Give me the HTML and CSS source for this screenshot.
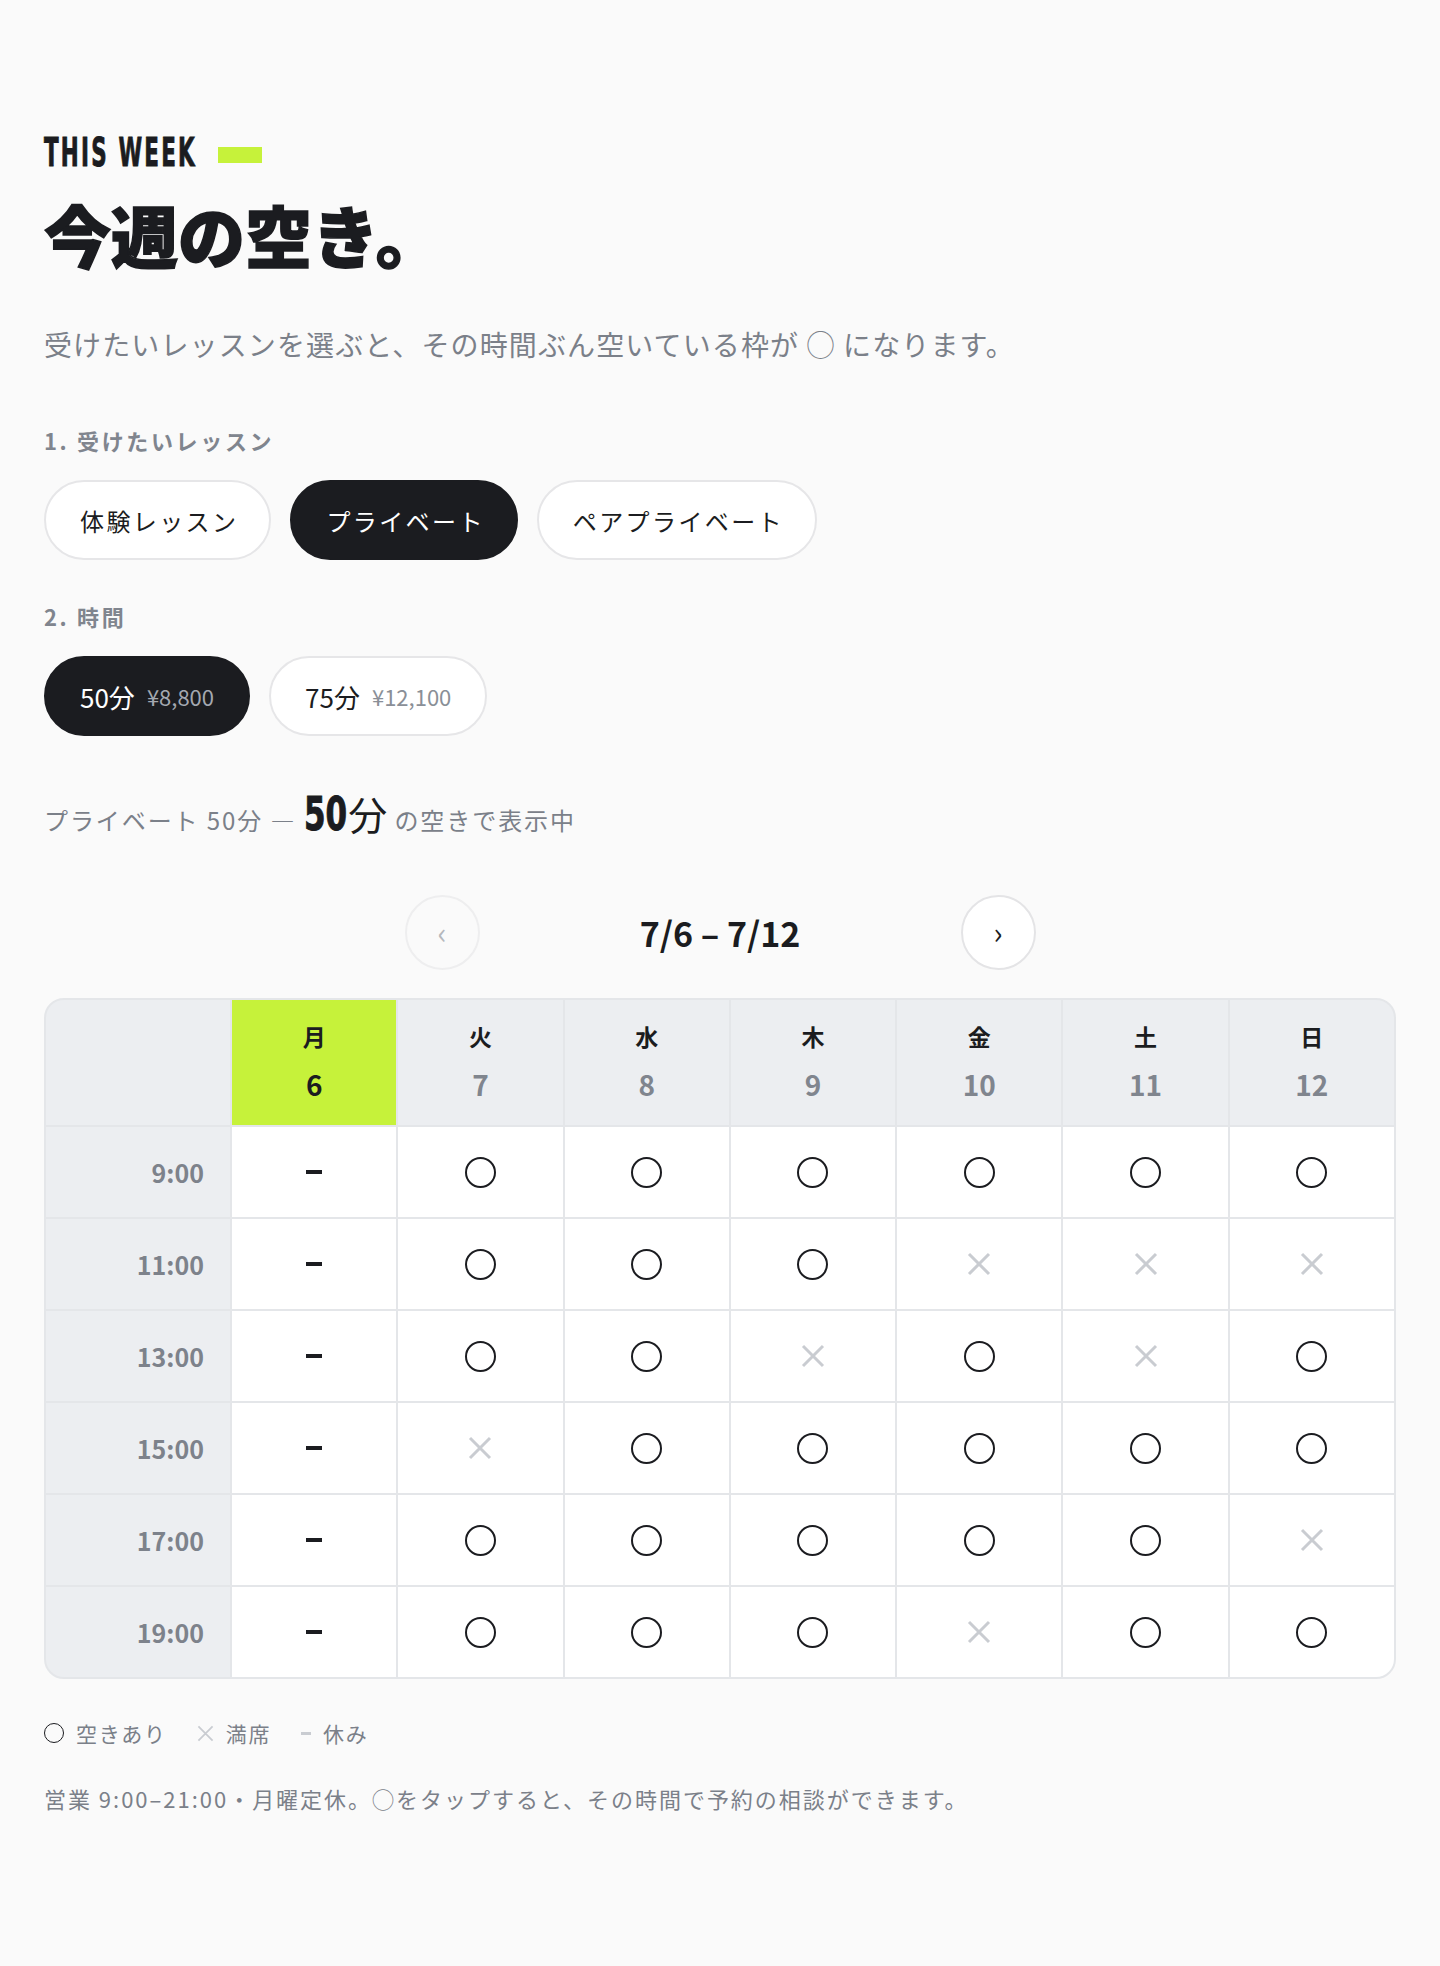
FILE: index.html
```html
<!DOCTYPE html>
<html lang="ja">
<head>
    <meta charset="UTF-8" />
    <meta name="viewport" content="width=device-width, initial-scale=1.0">
    <link rel="stylesheet" href="styles.css">
</head>
<body>

    <main class="page">

        <div class="eyebrow">
            <div class="eyebrow-text"><span>THIS WEEK</span></div>
            <div class="eyebrow-bar"></div>
        </div>

        <h1 class="title">今週の空き。</h1>

        <p class="lead">受けたいレッスンを選ぶと、その時間ぶん空いている枠が ◯ になります。</p>

        <h2 class="step">1. 受けたいレッスン</h2>
        <div class="pills">
            <button class="pill">体験レッスン</button>
            <button class="pill is-active">プライベート</button>
            <button class="pill">ペアプライベート</button>
        </div>

        <h2 class="step">2. 時間</h2>
        <div class="pills">
            <button class="pill pill-time is-active">50分<small>¥8,800</small></button>
            <button class="pill pill-time">75分<small>¥12,100</small></button>
        </div>

        <p class="summary">
            プライベート 50分 — <span class="summary-big"><b>50</b>分</span> の空きで表示中
        </p>

        <div class="week-nav">
            <button class="nav-btn is-disabled">‹</button>
            <div class="week-title">7/6 – 7/12</div>
            <button class="nav-btn">›</button>
        </div>

        <div class="schedule">
            <div class="cell head corner"></div>
            <div class="cell head today"><span class="dow">月</span><span class="date">6</span></div>
            <div class="cell head"><span class="dow">火</span><span class="date">7</span></div>
            <div class="cell head"><span class="dow">水</span><span class="date">8</span></div>
            <div class="cell head"><span class="dow">木</span><span class="date">9</span></div>
            <div class="cell head"><span class="dow">金</span><span class="date">10</span></div>
            <div class="cell head"><span class="dow">土</span><span class="date">11</span></div>
            <div class="cell head"><span class="dow">日</span><span class="date">12</span></div>

            <!-- 9:00 -->
            <div class="cell time">9:00</div>
            <div class="cell"><span class="off"></span></div>
            <div class="cell"><span class="open"></span></div>
            <div class="cell"><span class="open"></span></div>
            <div class="cell"><span class="open"></span></div>
            <div class="cell"><span class="open"></span></div>
            <div class="cell"><span class="open"></span></div>
            <div class="cell"><span class="open"></span></div>

            <!-- 11:00 -->
            <div class="cell time">11:00</div>
            <div class="cell"><span class="off"></span></div>
            <div class="cell"><span class="open"></span></div>
            <div class="cell"><span class="open"></span></div>
            <div class="cell"><span class="open"></span></div>
            <div class="cell"><svg class="full" viewBox="0 0 24 24"><path d="M2 2L22 22M22 2L2 22"/></svg></div>
            <div class="cell"><svg class="full" viewBox="0 0 24 24"><path d="M2 2L22 22M22 2L2 22"/></svg></div>
            <div class="cell"><svg class="full" viewBox="0 0 24 24"><path d="M2 2L22 22M22 2L2 22"/></svg></div>

            <!-- 13:00 -->
            <div class="cell time">13:00</div>
            <div class="cell"><span class="off"></span></div>
            <div class="cell"><span class="open"></span></div>
            <div class="cell"><span class="open"></span></div>
            <div class="cell"><svg class="full" viewBox="0 0 24 24"><path d="M2 2L22 22M22 2L2 22"/></svg></div>
            <div class="cell"><span class="open"></span></div>
            <div class="cell"><svg class="full" viewBox="0 0 24 24"><path d="M2 2L22 22M22 2L2 22"/></svg></div>
            <div class="cell"><span class="open"></span></div>

            <!-- 15:00 -->
            <div class="cell time">15:00</div>
            <div class="cell"><span class="off"></span></div>
            <div class="cell"><svg class="full" viewBox="0 0 24 24"><path d="M2 2L22 22M22 2L2 22"/></svg></div>
            <div class="cell"><span class="open"></span></div>
            <div class="cell"><span class="open"></span></div>
            <div class="cell"><span class="open"></span></div>
            <div class="cell"><span class="open"></span></div>
            <div class="cell"><span class="open"></span></div>

            <!-- 17:00 -->
            <div class="cell time">17:00</div>
            <div class="cell"><span class="off"></span></div>
            <div class="cell"><span class="open"></span></div>
            <div class="cell"><span class="open"></span></div>
            <div class="cell"><span class="open"></span></div>
            <div class="cell"><span class="open"></span></div>
            <div class="cell"><span class="open"></span></div>
            <div class="cell"><svg class="full" viewBox="0 0 24 24"><path d="M2 2L22 22M22 2L2 22"/></svg></div>

            <!-- 19:00 -->
            <div class="cell time">19:00</div>
            <div class="cell"><span class="off"></span></div>
            <div class="cell"><span class="open"></span></div>
            <div class="cell"><span class="open"></span></div>
            <div class="cell"><span class="open"></span></div>
            <div class="cell"><svg class="full" viewBox="0 0 24 24"><path d="M2 2L22 22M22 2L2 22"/></svg></div>
            <div class="cell"><span class="open"></span></div>
            <div class="cell"><span class="open"></span></div>
        </div>

        <div class="legend">
            <span class="legend-item"><span class="open small"></span>空きあり</span>
            <span class="legend-item"><svg class="full small" viewBox="0 0 24 24"><path d="M2 2L22 22M22 2L2 22"/></svg>満席</span>
            <span class="legend-item"><span class="off small"></span>休み</span>
        </div>

        <p class="note">営業 9:00–21:00・月曜定休。◯をタップすると、その時間で予約の相談ができます。</p>

    </main>

</body>
</html>
```

FILE: styles.css
```css
* {
    margin: 0;
    padding: 0;
    box-sizing: border-box;
}

body {
    background: #fafafa;
    color: #1b1c20;
    font-family: "Noto Sans CJK JP", "Noto Sans", sans-serif;
}

button {
    font-family: inherit;
    cursor: pointer;
}

.page {
    padding: 133px 44px 120px;
}

/* heading */

.eyebrow {
    display: flex;
    align-items: center;
    gap: 20px;
    height: 40px;
}

.eyebrow-text {
    width: 154px;
    white-space: nowrap;
}

.eyebrow-text span {
    display: inline-block;
    font-family: "DejaVu Sans", sans-serif;
    font-weight: 700;
    font-size: 39px;
    line-height: 40px;
    letter-spacing: 4px;
    -webkit-text-stroke: 1px #1b1c20;
    transform: scaleX(.55);
    transform-origin: left center;
}

.eyebrow-bar {
    width: 44px;
    height: 16px;
    margin-top: 4px;
    background: #c6f23a;
}

.title {
    margin-top: 21px;
    font-size: 67px;
    line-height: 80px;
    font-weight: 900;
    -webkit-text-stroke: 1.5px #1b1c20;
}

.lead {
    margin-top: 50px;
    font-size: 28px;
    line-height: 40px;
    letter-spacing: .04em;
    color: #7b8089;
}

/* selectors */

.step {
    margin-top: 40px;
    font-size: 22px;
    line-height: 32px;
    font-weight: 700;
    letter-spacing: .12em;
    color: #80858e;
}

.lead + .step {
    margin-top: 60px;
}

.pills {
    display: flex;
    gap: 19px;
    margin-top: 24px;
}

.pill {
    height: 80px;
    padding: 0 31px 0 34px;
    border: 2px solid #e6e6e8;
    border-radius: 40px;
    background: #fff;
    color: #1b1c20;
    font-size: 24px;
    letter-spacing: .1em;
    display: flex;
    align-items: center;
}

.pill-time {
    font-size: 26px;
    letter-spacing: 0;
    padding: 0 34px;
}

.pill small {
    margin-left: 12px;
    font-size: 22px;
    letter-spacing: 0;
    color: #8a8f97;
}

.pill.is-active {
    background: #1b1c20;
    border-color: #1b1c20;
    color: #fff;
}

.pill.is-active small {
    color: #a4a8b0;
}

/* summary */

.summary {
    margin-top: 52px;
    font-size: 24px;
    line-height: 50px;
    letter-spacing: .08em;
    color: #7b8089;
}

.summary-big {
    font-size: 39px;
    color: #1b1c20;
    letter-spacing: 0;
}

.summary-big b {
    display: inline-block;
    font-family: "DejaVu Sans", sans-serif;
    font-size: 47px;
    font-weight: 700;
    -webkit-text-stroke: 1px #1b1c20;
    transform: scaleX(.66);
    transform-origin: left center;
    margin-right: -21px;
}

/* week navigation */

.week-nav {
    width: 631px;
    margin: 50px auto 0;
    display: flex;
    align-items: center;
    justify-content: space-between;
}

.nav-btn {
    width: 75px;
    height: 75px;
    border-radius: 50%;
    border: 2px solid #e4e4e6;
    background: #fff;
    color: #1b1c20;
    font-size: 30px;
    line-height: 1;
    padding-bottom: 4px;
}

.nav-btn.is-disabled {
    border-color: #eeeeef;
    background: #fafafa;
    color: #b5b8bd;
}

.week-title {
    font-size: 34px;
    font-weight: 700;
}

/* schedule */

.schedule {
    margin-top: 28px;
    display: grid;
    grid-template-columns: 184px repeat(7, 1fr);
    grid-template-rows: 125px repeat(6, 90px);
    gap: 2px;
    background: #e4e6e9;
    border: 2px solid #e4e6e9;
    border-radius: 20px;
    overflow: hidden;
}

.cell {
    background: #fff;
    display: flex;
    align-items: center;
    justify-content: center;
}

.cell.head {
    background: #eceef1;
    flex-direction: column;
    justify-content: flex-start;
    padding-top: 21px;
}

.cell.head.today {
    background: #c6f23a;
}

.dow {
    font-size: 23px;
    line-height: 30px;
    font-weight: 700;
}

.date {
    margin-top: 16px;
    font-size: 28px;
    line-height: 34px;
    font-weight: 700;
    color: #80858e;
}

.today .date {
    color: #1b1c20;
}

.cell.time {
    background: #eceef1;
    justify-content: flex-end;
    padding-right: 26px;
    font-size: 25px;
    font-weight: 700;
    color: #7d828b;
}

.open {
    width: 31px;
    height: 31px;
    border: 2px solid #1b1c20;
    border-radius: 50%;
}

.off {
    width: 16px;
    height: 4px;
    background: #1b1c20;
}

.full {
    width: 24px;
    height: 24px;
    fill: none;
    stroke: #c9ccd1;
    stroke-width: 3;
}

/* legend */

.legend {
    margin-top: 39px;
    display: flex;
    gap: 30px;
    font-size: 21px;
    line-height: 30px;
    letter-spacing: .08em;
    color: #7b8089;
}

.legend-item {
    display: flex;
    align-items: center;
    gap: 12px;
}

.open.small {
    width: 20px;
    height: 20px;
    border-width: 1.5px;
}

.full.small {
    width: 17px;
    height: 17px;
    stroke-width: 2.5;
}

.off.small {
    width: 10px;
    height: 3px;
    background: #c9ccd1;
}

.note {
    margin-top: 35px;
    font-size: 22px;
    line-height: 30px;
    letter-spacing: .09em;
    color: #7b8089;
}
```
